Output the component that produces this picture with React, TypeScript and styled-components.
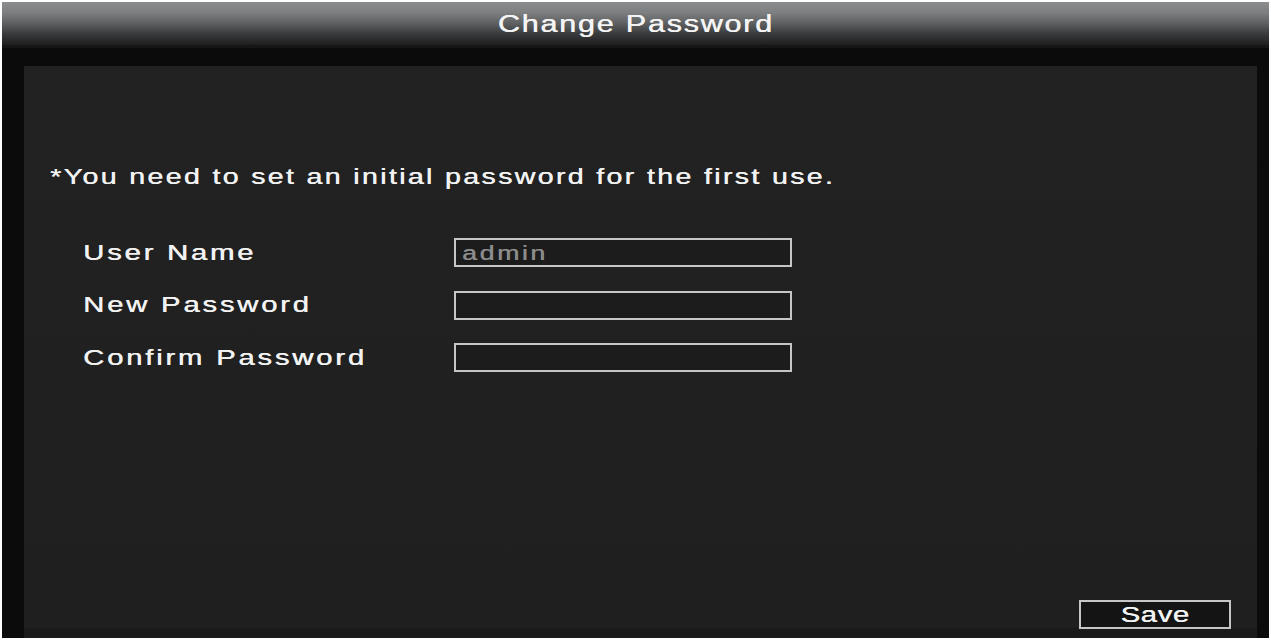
import React from "react";
import styled, { createGlobalStyle } from "styled-components";

const GlobalStyle = createGlobalStyle`
  html, body {
    margin: 0;
    padding: 0;
    background: #ffffff;
  }
  body {
    font-family: "Liberation Sans", Arial, sans-serif;
  }
`;

const Screen = styled.div`
  margin: 2px 2px 0 2px;
  width: 1267px;
  height: 636px;
  background: #0b0b0b;
  display: flex;
  flex-direction: column;
  overflow: hidden;
`;

const TitleBar = styled.div`
  height: 43px;
  flex: none;
  display: flex;
  align-items: center;
  justify-content: center;
  background: linear-gradient(
    to bottom,
    #8b8d8f 0%,
    #7c7e80 25%,
    #5d5f61 50%,
    #38393b 75%,
    #1f1f20 100%
  );
  border-bottom: 3px solid #161616;
`;

const Body = styled.div`
  flex: 1;
  display: flex;
  padding: 18px 12px 0 22px;
  min-height: 0;
`;

const Panel = styled.div`
  flex: 1;
  display: flex;
  flex-direction: column;
  background: linear-gradient(
    to bottom,
    #222222 0,
    #1f1f1f calc(100% - 10px),
    #1a1a1a calc(100% - 10px),
    #1a1a1a 100%
  );
`;

const Stretch = styled.span<{
  $size: number;
  $spacing: number;
  $color?: string;
  $origin?: string;
}>`
  display: inline-block;
  white-space: nowrap;
  font-family: "Liberation Sans", Arial, sans-serif;
  font-size: ${(p) => p.$size}px;
  line-height: 26px;
  letter-spacing: ${(p) => p.$spacing}px;
  color: ${(p) => p.$color ?? "#f2f2f2"};
  text-shadow: 0.4px 0 0 ${(p) => p.$color ?? "#f2f2f2"};
  transform: scaleX(1.33);
  transform-origin: ${(p) => p.$origin ?? "left center"};
`;

const Notice = styled.div`
  margin: 98px 0 0 26px;
  height: 26px;
`;

const Form = styled.div`
  margin: 48px 0 0 59px;
  display: grid;
  grid-template-columns: 371px 338px;
  grid-auto-rows: 29px;
  row-gap: 23.5px;
  align-items: center;
`;

const Label = styled.div`
  height: 29px;
  display: flex;
  align-items: center;
`;

const Field = styled.div`
  box-sizing: border-box;
  width: 338px;
  height: 29px;
  border: 2px solid #c6c6c6;
  background: #1c1c1c;
  display: flex;
  align-items: center;
  padding-left: 6px;
  overflow: hidden;
`;

const Footer = styled.div`
  margin-top: auto;
  display: flex;
  justify-content: flex-end;
  padding: 0 26px 9px 0;
`;

const SaveButton = styled.div`
  box-sizing: border-box;
  width: 152px;
  height: 29px;
  border: 2px solid #c6c6c6;
  background: #141414;
  display: flex;
  align-items: center;
  justify-content: center;
`;

const rows = [
  { label: "User Name", value: "admin" },
  { label: "New Password", value: "" },
  { label: "Confirm Password", value: "" },
];

export default function App() {
  return (
    <>
      <GlobalStyle />
      <Screen>
        <TitleBar>
          <Stretch $size={23} $spacing={1.3} $origin="center center" $color="#f4f4f4">
            Change Password
          </Stretch>
        </TitleBar>
        <Body>
          <Panel>
            <Notice>
              <Stretch $size={21.5} $spacing={1.75}>
                *You need to set an initial password for the first use.
              </Stretch>
            </Notice>
            <Form>
              {rows.map((r) => (
                <React.Fragment key={r.label}>
                  <Label>
                    <Stretch $size={22} $spacing={2.1}>
                      {r.label}
                    </Stretch>
                  </Label>
                  <Field>
                    {r.value && (
                      <Stretch $size={20} $spacing={2} $color="#8c8c8c">
                        {r.value}
                      </Stretch>
                    )}
                  </Field>
                </React.Fragment>
              ))}
            </Form>
            <Footer>
              <SaveButton>
                <Stretch $size={22} $spacing={0.5} $origin="center center">
                  Save
                </Stretch>
              </SaveButton>
            </Footer>
          </Panel>
        </Body>
      </Screen>
    </>
  );
}
